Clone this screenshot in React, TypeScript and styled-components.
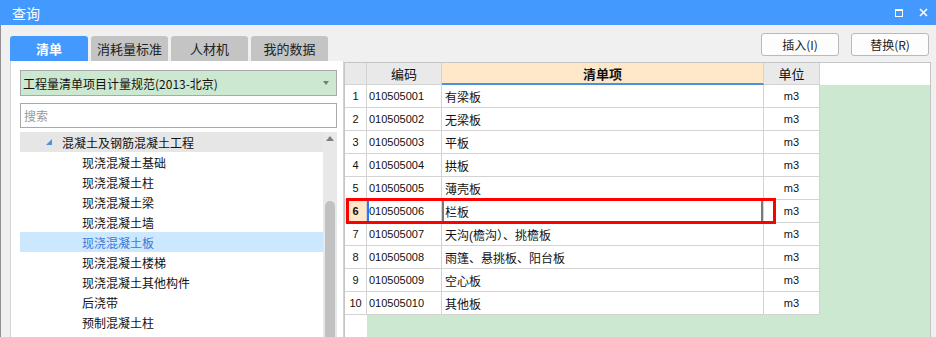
import React from "react";
import styled, { createGlobalStyle } from "styled-components";

const GlobalStyle = createGlobalStyle`
  html, body { margin: 0; padding: 0; background: #f0f0f0; }
  body { font-family: "Noto Sans CJK SC", "Liberation Sans", sans-serif; }
  * { box-sizing: border-box; }
`;

const tabs = ["清单", "消耗量标准", "人材机", "我的数据"];
const treeItems = ["现浇混凝土基础", "现浇混凝土柱", "现浇混凝土梁", "现浇混凝土墙", "现浇混凝土板", "现浇混凝土楼梯", "现浇混凝土其他构件", "后浇带", "预制混凝土柱"];
const rows = [
  { code: "010505001", name: "有梁板" },
  { code: "010505002", name: "无梁板" },
  { code: "010505003", name: "平板" },
  { code: "010505004", name: "拱板" },
  { code: "010505005", name: "薄壳板" },
  { code: "010505006", name: "栏板" },
  { code: "010505007", name: "天沟(檐沟）、挑檐板" },
  { code: "010505008", name: "雨篷、悬挑板、阳台板" },
  { code: "010505009", name: "空心板" },
  { code: "010505010", name: "其他板" },
];

const Window = styled.div`
  width: 936px;
  height: 337px;
  overflow: hidden;
  display: flex;
  flex-direction: column;
`;

const TitleBar = styled.div`
  height: 25px;
  flex: none;
  background: #4499ff;
  color: #fff;
  display: flex;
  align-items: center;
  justify-content: space-between;
  padding: 0 8px 0 12px;
  font-size: 14px;
`;

const TitleIcons = styled.div`
  display: flex;
  align-items: center;
  gap: 16px;
`;

const MaxIcon = styled.div`
  width: 8px;
  height: 8px;
  border: 1px solid #fff;
  border-top-width: 2px;
`;

const Body = styled.div`
  flex: 1;
  display: flex;
  border-left: 1px solid #8f8f8f;
  padding: 0 5px 0 9px;
  min-height: 0;
`;

const LeftPane = styled.div`
  width: 334px;
  display: flex;
  flex-direction: column;
  padding-top: 11px;
`;

const Tabs = styled.div`
  display: flex;
  gap: 3px;
  height: 25px;
  flex: none;
`;

const Tab = styled.div<{ $active?: boolean }>`
  width: ${(p) => (p.$active ? 78 : 77)}px;
  border-radius: 3px 3px 0 0;
  background: ${(p) => (p.$active ? "#4499ff" : "#c4c4c4")};
  color: ${(p) => (p.$active ? "#fff" : "#222")};
  font-size: 13px;
  font-weight: ${(p) => (p.$active ? 600 : 400)};
  display: flex;
  align-items: center;
  justify-content: center;
`;

const LeftPanel = styled.div`
  flex: 1;
  background: #fff;
  border-left: 1px solid #d2d2d2;
  border-right: 1px solid #d2d2d2;
  padding: 9px 6px 0 9px;
  display: flex;
  flex-direction: column;
  min-height: 0;
`;

const Select = styled.div`
  height: 26px;
  background: #cde8d1;
  border: 1px solid #a9a9a9;
  display: flex;
  align-items: center;
  justify-content: space-between;
  padding: 0 7px 0 2px;
  font-size: 12px;
  color: #111;
`;

const DropArrow = styled.div`
  width: 0;
  height: 0;
  border-left: 3px solid transparent;
  border-right: 3px solid transparent;
  border-top: 4px solid #7a7a7a;
`;

const Search = styled.div`
  margin-top: 7px;
  height: 25px;
  border: 1px solid #a9a9a9;
  display: flex;
  align-items: center;
  padding-left: 3px;
  font-size: 12px;
  color: #999;
`;

const Tree = styled.div`
  margin-top: 4px;
  flex: 1;
  display: flex;
  min-height: 0;
`;

const TreeList = styled.div`
  flex: 1;
`;

const TreeRow = styled.div<{ $indent: number; $bg?: string; $color?: string }>`
  height: 20px;
  display: flex;
  align-items: center;
  padding-left: ${(p) => p.$indent}px;
  background: ${(p) => p.$bg || "transparent"};
  color: ${(p) => p.$color || "#111"};
  font-size: 12px;
  gap: 10px;
`;

const ScrollBar = styled.div`
  width: 14px;
  background: #e8e8e8;
  display: flex;
  flex-direction: column;
  align-items: center;
`;

const ScrollArrow = styled.div`
  margin-top: 4px;
  width: 0;
  height: 0;
  border-left: 4px solid transparent;
  border-right: 4px solid transparent;
  border-bottom: 5px solid #7d7d7d;
`;

const ScrollThumb = styled.div`
  margin-top: 60px;
  width: 10px;
  flex: 1;
  border-radius: 5px 5px 0 0;
  background: #c1c1c1;
`;

const RightPane = styled.div`
  flex: 1;
  display: flex;
  flex-direction: column;
  min-width: 0;
`;

const Toolbar = styled.div`
  display: flex;
  justify-content: flex-end;
  gap: 12px;
  padding: 8px 2px 0 0;
`;

const Button = styled.div`
  width: 78px;
  height: 23px;
  border: 1px solid #b9b9b9;
  border-radius: 3px;
  background: #fdfdfd;
  display: flex;
  align-items: center;
  justify-content: center;
  font-size: 12px;
  color: #222;
`;

const GridPanel = styled.div`
  margin-top: 6px;
  flex: 1;
  position: relative;
  background: #fff;
  border: 1px solid #c5c5c5;
  border-bottom: none;
  display: grid;
  grid-template-columns: 22px 75px 322px 56px 1fr;
  grid-template-rows: 22px repeat(10, 23px) 1fr;
  font-family: "Liberation Sans", "Noto Sans CJK SC", sans-serif;
`;

const Cell = styled.div<{ $align?: string; $bg?: string; $bold?: boolean; $size?: number; $edge?: string }>`
  border-right: 1px solid #d3d3d3;
  border-bottom: 1px solid #d3d3d3;
  background: ${(p) => p.$bg || "#fff"};
  display: flex;
  align-items: center;
  justify-content: ${(p) => p.$align || "flex-start"};
  padding: 0 2px;
  font-size: ${(p) => p.$size || 12}px;
  font-weight: ${(p) => (p.$bold ? 700 : 400)};
  color: #111;
  white-space: nowrap;
  box-shadow: ${(p) => p.$edge || "none"};
`;

const HeadCell = styled(Cell)<{ $accent?: boolean }>`
  border-bottom: ${(p) => (p.$accent ? "2px solid #4a90e2" : "1px solid #d3d3d3")};
  font-size: 13px;
  font-family: "Noto Sans CJK SC", sans-serif;
`;

const HeaderFill = styled.div`
  grid-column: 5;
  grid-row: 1;
  background: #fff;
`;

const SideFill = styled.div`
  grid-column: 5;
  grid-row: 2 / -1;
  background: #cde8d1;
`;

const BottomFill = styled.div`
  grid-column: 2 / 5;
  grid-row: 12;
  background: #cde8d1;
`;

const RowNumFill = styled.div`
  grid-column: 1;
  grid-row: 12;
  background: #fff;
`;

const Highlight = styled.div`
  position: absolute;
  left: 1px;
  top: 135px;
  width: 430px;
  height: 26px;
  border: 3px solid #ff0000;
  pointer-events: none;
`;

export default function App() {
  const current = 5;
  return (
    <>
      <GlobalStyle />
      <Window>
        <TitleBar>
          <span>查询</span>
          <TitleIcons>
            <MaxIcon />
            <svg width="9" height="9" viewBox="0 0 9 9">
              <path d="M1 1 L8 8 M8 1 L1 8" stroke="#fff" strokeWidth="1.6" />
            </svg>
          </TitleIcons>
        </TitleBar>
        <Body>
          <LeftPane>
            <Tabs>
              {tabs.map((t, i) => (
                <Tab key={t} $active={i === 0}>{t}</Tab>
              ))}
            </Tabs>
            <LeftPanel>
              <Select>
                <span>工程量清单项目计量规范(2013-北京)</span>
                <DropArrow />
              </Select>
              <Search>搜索</Search>
              <Tree>
                <TreeList>
                  <TreeRow $indent={26} $bg="#e6e6e6">
                    <svg width="6" height="6" viewBox="0 0 6 6">
                      <polygon points="6,0 6,6 0,6" fill="#4a90e2" />
                    </svg>
                    <span>混凝土及钢筋混凝土工程</span>
                  </TreeRow>
                  {treeItems.map((t, i) => (
                    <TreeRow
                      key={t}
                      $indent={62}
                      $bg={i === 4 ? "#cce8ff" : undefined}
                      $color={i === 4 ? "#3b78d6" : undefined}
                    >
                      {t}
                    </TreeRow>
                  ))}
                </TreeList>
                <ScrollBar>
                  <ScrollArrow />
                  <ScrollThumb />
                </ScrollBar>
              </Tree>
            </LeftPanel>
          </LeftPane>
          <RightPane>
            <Toolbar>
              <Button>插入(I)</Button>
              <Button>替换(R)</Button>
            </Toolbar>
            <GridPanel>
              <HeadCell $bg="#e9e9e9" />
              <HeadCell $bg="#e9e9e9" $align="center">编码</HeadCell>
              <HeadCell $bg="#ffe7c9" $align="center" $bold $accent>清单项</HeadCell>
              <HeadCell $bg="#e9e9e9" $align="center">单位</HeadCell>
              <HeaderFill />
              {rows.map((r, i) => (
                <React.Fragment key={r.code}>
                  <Cell
                    $align="center"
                    $size={11}
                    $bg={i === current ? "#ffe7c9" : undefined}
                    $bold={i === current}
                  >
                    {i + 1}
                  </Cell>
                  <Cell $size={11} $edge={i === current ? "inset 2px 0 #1f7bff" : undefined}>
                    {r.code}
                  </Cell>
                  <Cell $edge={i === current ? "inset 2px 0 #7a7a7a, inset -2px 0 #7a7a7a" : undefined}>
                    <span style={{ paddingLeft: 1 }}>{r.name}</span>
                  </Cell>
                  <Cell $align="center" $size={11}>m3</Cell>
                </React.Fragment>
              ))}
              <SideFill />
              <RowNumFill />
              <BottomFill />
              <Highlight />
            </GridPanel>
          </RightPane>
        </Body>
      </Window>
    </>
  );
}
